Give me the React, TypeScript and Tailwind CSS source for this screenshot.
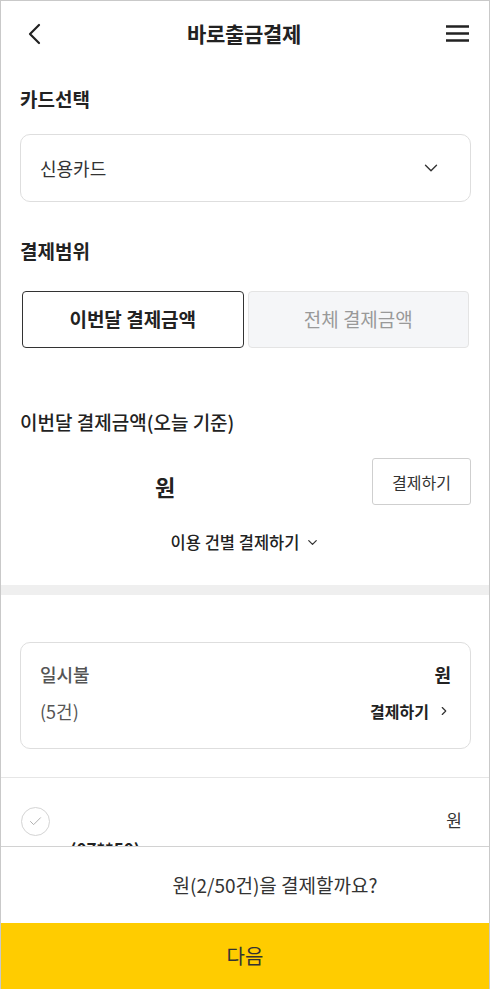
import { ChevronDown, ChevronRight, Check } from 'lucide-react';

export default function App() {
  return (
    <div className="w-[490px] h-[989px] border-x border-t border-[#c9c9c9] bg-white flex flex-col overflow-hidden font-['Noto_Sans_CJK_KR','Noto_Sans',sans-serif] text-[#222]">
      <div className="flex-1 overflow-hidden">
        {/* Header */}
        <div className="h-[67px] pb-[2px] flex items-center justify-between pl-[25px] pr-[20px]">
          <svg width="16" height="22" viewBox="0 0 16 22" fill="none" stroke="#222" strokeWidth="2.2" strokeLinecap="round" strokeLinejoin="round">
            <path d="M13 2 L4 11 L13 20" />
          </svg>
          <h1 className="text-[21px] font-bold tracking-[-0.3px]">바로출금결제</h1>
          <svg width="23" height="19" viewBox="0 0 23 19" fill="none" stroke="#222" strokeWidth="2.4">
            <path d="M0 2.5 H23 M0 9.5 H23 M0 16.5 H23" />
          </svg>
        </div>

        <div className="pl-[19px] pr-[18px]">
          {/* Card select */}
          <h2 className="mt-[17px] text-[19px] leading-[28px] font-bold">카드선택</h2>
          <button className="mt-[21px] w-full h-[68px] rounded-[10px] border border-[#dedede] flex items-center justify-between pl-[19px] pr-[28px]">
            <span className="text-[18px] text-[#333]">신용카드</span>
            <ChevronDown className="w-[22px] h-[22px] text-[#333]" strokeWidth={1.5} />
          </button>

          {/* Range */}
          <h2 className="mt-[35px] text-[19px] leading-[28px] font-bold">결제범위</h2>
          <div className="mt-[26px] flex gap-[4px] px-[2px]">
            <button className="flex-1 h-[57px] rounded-[4px] border border-[#333] text-[19px] font-bold text-[#222]">
              이번달 결제금액
            </button>
            <button className="flex-1 h-[57px] rounded-[4px] border border-[#e4e4e4] bg-[#f5f6f8] text-[19px] text-[#999]">
              전체 결제금액
            </button>
          </div>

          {/* This month */}
          <h2 className="mt-[60px] text-[19px] leading-[28px] font-medium">이번달 결제금액(오늘 기준)</h2>
          <div className="mt-[22px] flex items-center justify-between">
            <div className="w-[290px] pt-[10px] text-center text-[22px] font-bold">원</div>
            <button className="w-[99px] h-[47px] rounded-[3px] border border-[#cfcfcf] text-[16px] text-[#333]">
              결제하기
            </button>
          </div>
          <div className="mt-[25px] flex items-center justify-center gap-[6px]">
            <span className="text-[16.5px] leading-[24px] font-medium">이용 건별 결제하기</span>
            <ChevronDown className="w-[15px] h-[15px] text-[#333]" strokeWidth={2} />
          </div>
        </div>

        <div className="mt-[31px] h-[10px] bg-[#efefef]" />

        <div className="pl-[19px] pr-[18px]">
          <div className="mt-[47px] h-[107px] rounded-[10px] border border-[#dedede] px-[19px] pt-[17px] flex flex-col gap-[9px]">
            <div className="flex items-center justify-between h-[28px]">
              <span className="text-[18px] text-[#555] font-medium">일시불</span>
              <span className="text-[18px] font-bold">원</span>
            </div>
            <div className="flex items-center justify-between h-[28px]">
              <span className="text-[18px] text-[#555]">(5건)</span>
              <span className="flex items-center gap-[8px]">
                <span className="text-[16px] font-bold">결제하기</span>
                <ChevronRight className="w-[14px] h-[14px] text-[#333]" strokeWidth={2} />
              </span>
            </div>
          </div>
        </div>

        <div className="mt-[28px] h-px bg-[#e6e6e6]" />

        <div className="pl-[20px] pr-[27px] pt-[29px] flex items-start justify-between">
          <div className="flex items-start gap-[20px]">
            <div className="w-[29px] h-[29px] rounded-full border border-[#d4d4d4] flex items-center justify-center">
              <Check className="w-[15px] h-[15px] text-[#aaa]" strokeWidth={1.5} />
            </div>
            <div className="pt-[30px] text-[17px] font-bold leading-[24px]">(07**50)</div>
          </div>
          <span className="text-[17px] text-[#333]">원</span>
        </div>
      </div>

      {/* Bottom panel */}
      <div className="border-t border-[#d2d2d2] h-[77px] flex items-center justify-center pl-[60px]">
        <span className="text-[19px] text-[#333]">원(2/50건)을 결제할까요?</span>
      </div>
      <button className="h-[66px] bg-[#ffcc00] text-[20px] text-[#333] flex items-center justify-center">
        다음
      </button>
    </div>
  );
}
